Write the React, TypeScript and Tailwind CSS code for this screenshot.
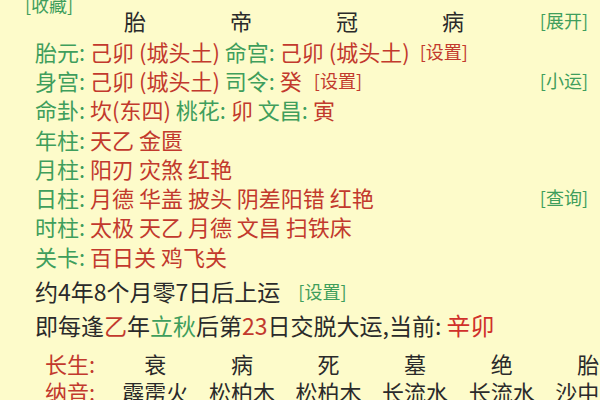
const green = "text-[#3f9e5c]";
const red = "text-[#c2392d]";

function Tag({ children, className = "" }: { children: string; className?: string }) {
  return <span className={`text-[18px] leading-none ${className}`}>{children}</span>;
}

function Row({ children, tag }: { children: React.ReactNode; tag?: string }) {
  return (
    <div className="flex h-[29.3px] items-center whitespace-pre pl-[35px] text-[22px] leading-none">
      {children}
      {tag ? <Tag className={`ml-auto pr-[12px] ${green}`}>{tag}</Tag> : null}
    </div>
  );
}

const shensha: [string, string][] = [
  ["年柱", "天乙 金匮"],
  ["月柱", "阳刃 灾煞 红艳"],
  ["日柱", "月德 华盖 披头 阴差阳错 红艳"],
  ["时柱", "太极 天乙 月德 文昌 扫铁床"],
  ["关卡", "百日关 鸡飞关"],
];

const changsheng = ["衰", "病", "死", "墓", "绝", "胎"];
const nayin = ["霹雳火", "松柏木", "松柏木", "长流水", "长流水", "沙中土"];

export default function App() {
  return (
    <div className="h-[400px] w-[600px] overflow-hidden bg-[#fdfbca] font-['Noto_Sans_CJK_SC',sans-serif] text-[#2a2a2a]">
      {/* row cut off by the top edge */}
      <div className="-mt-[6px] flex h-[20px] items-center whitespace-pre pl-[25px]">
        <Tag className={green}>[收藏]</Tag>
        <span className="-mt-[16px] ml-[265px] self-start text-[18px] leading-none text-[#6b6b5a]">冠带 (帝旺)   (衰病)</span>
      </div>

      <div className="flex h-[12px] items-center">
        <div className="ml-[82px] grid w-[424px] shrink-0 grid-cols-4 text-center text-[22px] leading-none">
          <span>胎</span>
          <span>帝</span>
          <span>冠</span>
          <span>病</span>
        </div>
        <Tag className={`ml-auto pr-[12px] ${green}`}>[展开]</Tag>
      </div>

      <div className="mt-[10px] flex flex-col">
        <Row>
          <span className={green}>胎元: </span>
          <span className={red}>己卯 (城头土) </span>
          <span className={green}>命宫: </span>
          <span className={red}>己卯 (城头土)</span>
          <Tag className={`ml-[10px] ${red}`}>[设置]</Tag>
        </Row>
        <Row tag="[小运]">
          <span className={green}>身宫: </span>
          <span className={red}>己卯 (城头土) </span>
          <span className={green}>司令: </span>
          <span className={red}>癸</span>
          <Tag className={`ml-[12px] ${red}`}>[设置]</Tag>
        </Row>
        <Row>
          <span className={green}>命卦: </span>
          <span className={red}>坎(东四) </span>
          <span className={green}>桃花: </span>
          <span className={red}>卯 </span>
          <span className={green}>文昌: </span>
          <span className={red}>寅</span>
        </Row>
        {shensha.map(([k, v]) => (
          <Row key={k} tag={k === "日柱" ? "[查询]" : undefined}>
            <span className={green}>{k}: </span>
            <span className={red}>{v}</span>
          </Row>
        ))}
      </div>

      <div className="mt-[4px] flex h-[34px] items-center pl-[35px] text-[23px] leading-none">
        <span>约4年8个月零7日后上运</span>
        <Tag className={`ml-[18px] ${green}`}>[设置]</Tag>
      </div>
      <div className="flex h-[34px] items-center whitespace-pre pl-[35px] text-[23px] leading-none">
        <span>即每逢</span>
        <span className={red}>乙</span>
        <span>年</span>
        <span className={green}>立秋</span>
        <span>后第</span>
        <span className={red}>23</span>
        <span>日交脱大运,当前: </span>
        <span className="text-[24px] text-[#d0302a]">辛卯</span>
      </div>

      <div className="mt-[7px] flex h-[28px] items-center pl-[45px] text-[22px] leading-none">
        <span className={`w-[67px] shrink-0 ${red}`}>长生:</span>
        {changsheng.map((c, i) => (
          <span key={i} className="w-[86.6px] shrink-0 text-center">
            {c}
          </span>
        ))}
      </div>
      <div className="flex h-[28px] items-center pl-[45px] text-[22px] leading-none">
        <span className={`w-[67px] shrink-0 ${red}`}>纳音:</span>
        {nayin.map((c, i) => (
          <span key={i} className="w-[86.6px] shrink-0 text-center">
            {c}
          </span>
        ))}
      </div>
    </div>
  );
}
